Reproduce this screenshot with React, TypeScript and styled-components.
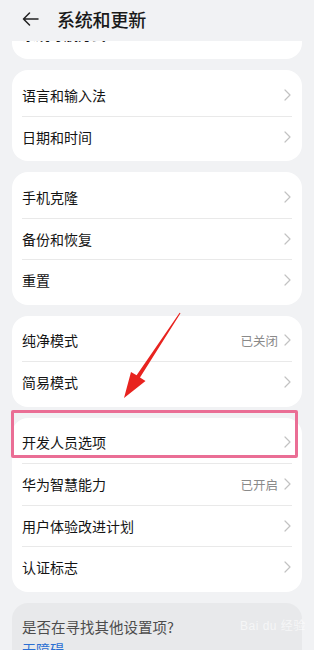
import React, { useLayoutEffect, useRef } from "react";
import styled, { createGlobalStyle } from "styled-components";

const GlobalStyle = createGlobalStyle`
  html, body { margin: 0; padding: 0; background: #f1f2f4; }
  body { font-family: "Noto Sans CJK SC", "Noto Sans", sans-serif; -webkit-font-smoothing: antialiased; }
  * { box-sizing: border-box; }
`;

const Screen = styled.div`
  position: relative;
  width: 314px;
  height: 650px;
  overflow: hidden;
  display: flex;
  flex-direction: column;
  background: #f1f2f4;
`;

const Header = styled.header`
  position: relative;
  flex: 0 0 41px;
  display: flex;
  align-items: center;
  gap: 18px;
  padding: 0 0 4px 22px;
  background: #f1f2f4;
  z-index: 1;
`;

const BackButton = styled.button`
  border: 0;
  background: none;
  padding: 0;
  width: 17px;
  height: 17px;
  display: flex;
  align-items: center;
  justify-content: center;
  color: #1f1f1f;
`;

const Title = styled.h1`
  margin: 0;
  font-size: 18px;
  font-weight: 500;
  color: #1a1a1a;
  letter-spacing: -0.2px;
`;

const Viewport = styled.div`
  flex: 1;
  overflow-y: scroll;
  scrollbar-width: none;
  &::-webkit-scrollbar { display: none; }
`;

const Content = styled.div`
  display: flex;
  flex-direction: column;
  gap: 11px;
  padding: 8px 12px 40px;
`;

const Card = styled.section<{ $muted?: boolean }>`
  background: ${(p) => (p.$muted ? "#e8e9eb" : "#ffffff")};
  border-radius: 16px;
  padding: ${(p) => (p.$muted ? "14px 10px 10px" : "4px 10px")};
`;

const Row = styled.div`
  height: 41.5px;
  display: flex;
  align-items: center;
  justify-content: space-between;
  & + & { border-top: 1px solid #e9e9e9; }
`;

const Label = styled.span`
  font-size: 14px;
  color: #141414;
`;

const Trailing = styled.span`
  display: flex;
  align-items: center;
  gap: 6px;
  padding-right: 1px;
`;

const Value = styled.span`
  font-size: 12.5px;
  color: #8a8a8a;
`;

const Hint = styled.p`
  margin: 0;
  font-size: 14.5px;
  line-height: 20px;
  color: #4d4d4d;
`;

const Link = styled.a`
  display: block;
  margin-top: 2px;
  font-size: 14px;
  line-height: 20px;
  color: #2b6fd3;
  text-decoration: none;
`;

const Highlight = styled.div`
  position: absolute;
  left: 11px;
  top: 410px;
  width: 287px;
  height: 48px;
  border: 3px solid #ea6e95;
  border-radius: 2px;
  pointer-events: none;
`;

const ArrowMark = styled.svg`
  position: absolute;
  left: 0;
  top: 0;
  pointer-events: none;
`;

const Watermark = styled.span`
  position: absolute;
  left: 240px;
  top: 616px;
  font-family: "Liberation Sans", "Noto Sans CJK SC", sans-serif;
  font-size: 12px;
  color: rgba(255, 255, 255, 0.6);
  letter-spacing: 0.5px;
  pointer-events: none;
`;

const Chevron = () => (
  <svg width="7" height="12" viewBox="0 0 7 12" fill="none">
    <polyline points="1,1 6,6 1,11" stroke="#c2c2c2" strokeWidth="1.2" strokeLinecap="round" strokeLinejoin="round" />
  </svg>
);

type Item = { label: string; value?: string };

const groups: Item[][] = [
  [{ label: "软件更新" }],
  [{ label: "系统导航方式" }],
  [{ label: "语言和输入法" }, { label: "日期和时间" }],
  [{ label: "手机克隆" }, { label: "备份和恢复" }, { label: "重置" }],
  [{ label: "纯净模式", value: "已关闭" }, { label: "简易模式" }],
  [
    { label: "开发人员选项" },
    { label: "华为智慧能力", value: "已开启" },
    { label: "用户体验改进计划" },
    { label: "认证标志" },
  ],
];

export default function App() {
  const viewportRef = useRef<HTMLDivElement>(null);
  const anchorRef = useRef<HTMLElement>(null);

  useLayoutEffect(() => {
    const vp = viewportRef.current;
    const anchor = anchorRef.current;
    if (vp && anchor) {
      vp.scrollTop = anchor.offsetTop + anchor.offsetHeight - vp.offsetTop - 19;
    }
  }, []);

  return (
    <>
      <GlobalStyle />
      <Screen>
        <Header>
          <BackButton aria-label="返回">
            <svg width="17" height="14" viewBox="0 0 17 14" fill="none">
              <path d="M16 7H1.5M7.5 1L1.5 7l6 6" stroke="#222" strokeWidth="1.5" strokeLinecap="round" strokeLinejoin="round" />
            </svg>
          </BackButton>
          <Title>系统和更新</Title>
        </Header>
        <Viewport ref={viewportRef}>
          <Content>
            {groups.map((g, i) => (
              <Card key={i} ref={i === 1 ? anchorRef : undefined}>
                {g.map((it) => (
                  <Row key={it.label}>
                    <Label>{it.label}</Label>
                    <Trailing>
                      {it.value && <Value>{it.value}</Value>}
                      <Chevron />
                    </Trailing>
                  </Row>
                ))}
              </Card>
            ))}
            <Card $muted>
              <Hint>是否在寻找其他设置项?</Hint>
              <Link>无障碍</Link>
            </Card>
          </Content>
        </Viewport>
        <Highlight />
        <ArrowMark width="314" height="650" viewBox="0 0 314 650">
          <polygon
            points="180.5,313.3 140,377.6 145.5,381 124,398 131,372 136.6,375.2 179.6,312.7"
            fill="#e8231f"
          />
        </ArrowMark>
        <Watermark>Bai du 经验</Watermark>
      </Screen>
    </>
  );
}
